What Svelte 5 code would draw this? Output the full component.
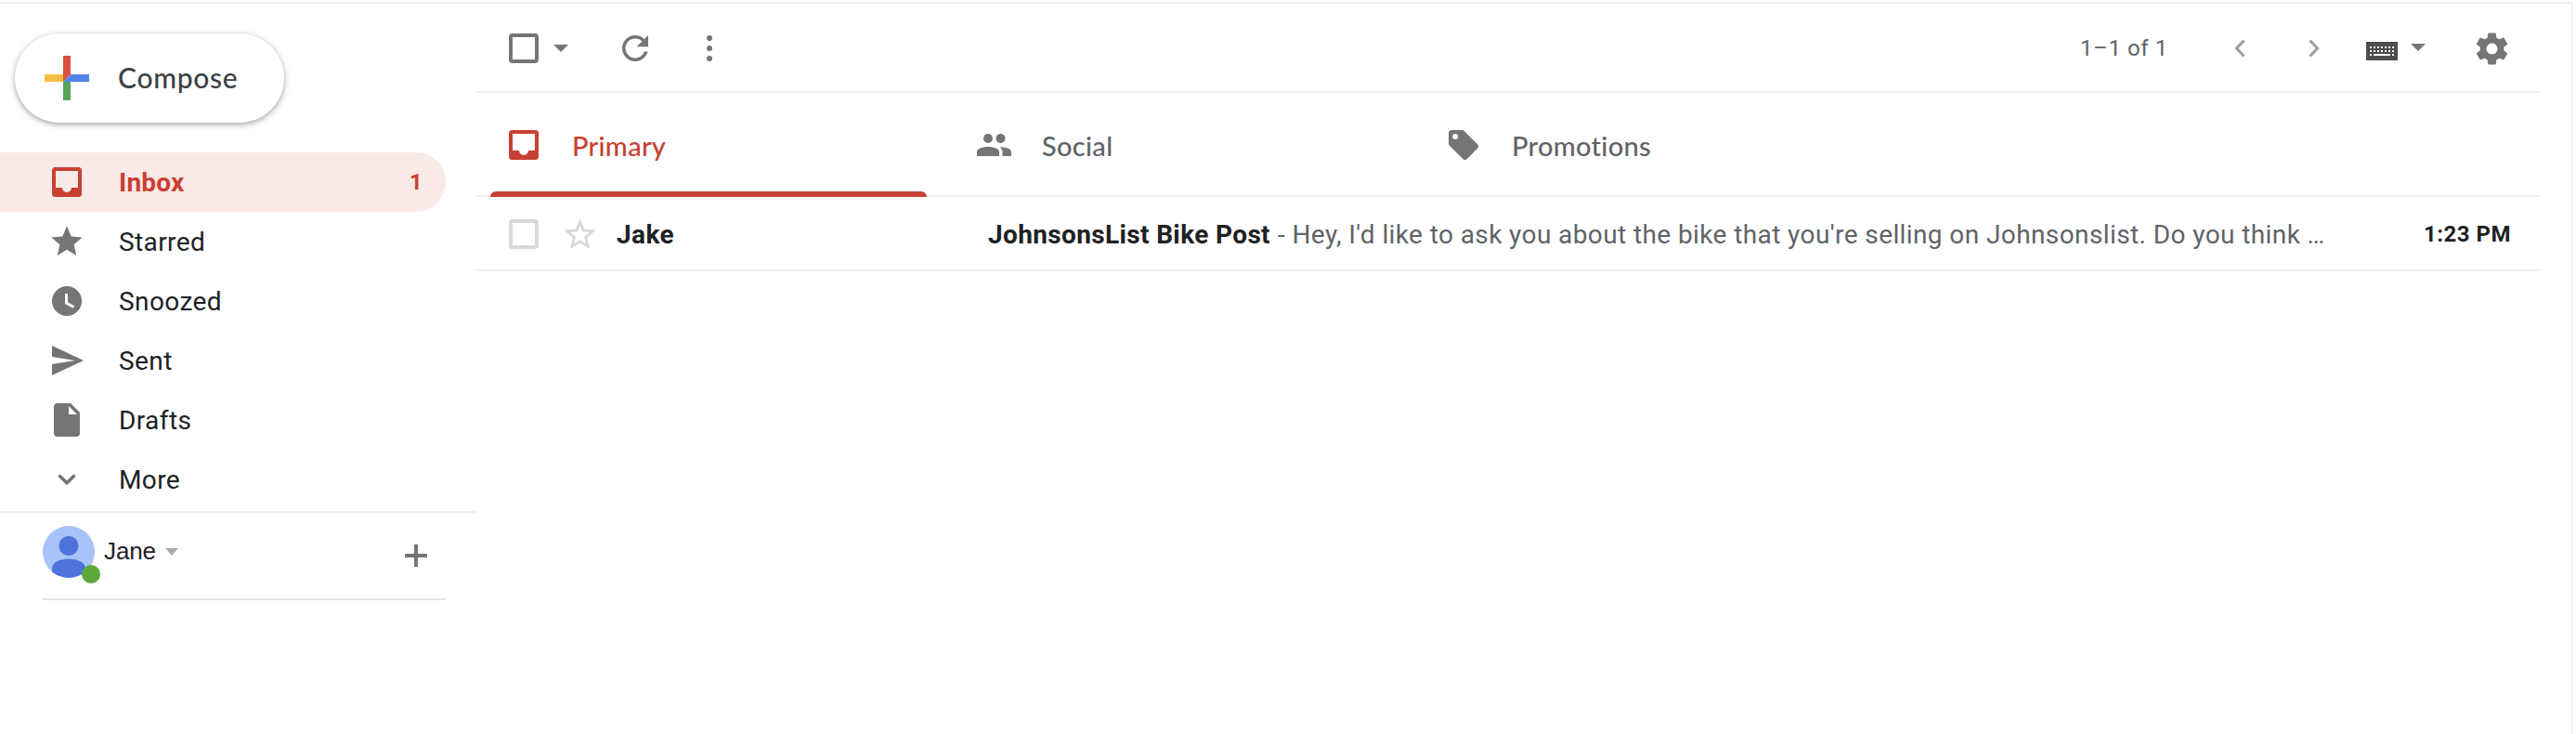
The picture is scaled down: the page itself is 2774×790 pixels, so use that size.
<script>
  const paths = {
    star: 'M12 17.27L18.18 21l-1.64-7.03L22 9.24l-7.19-.61L12 2 9.19 8.63 2 9.24l5.46 4.73L5.82 21z'
  };
  const folders = ['Starred', 'Snoozed', 'Sent', 'Drafts', 'More'];
</script>

{#snippet inboxIcon()}
  <svg class="i32" viewBox="0 0 32 32">
    <path fill-rule="evenodd" d="M3.5 0h25A3.5 3.5 0 0 1 32 3.5v25a3.5 3.5 0 0 1-3.5 3.5h-25A3.5 3.5 0 0 1 0 28.5v-25A3.5 3.5 0 0 1 3.5 0zM4 4v18h7a5 5 0 0 0 10 0h7V4z" />
  </svg>
{/snippet}

<div class="app">
  <aside>
    <button class="compose">
      <svg width="48" height="48" viewBox="0 0 48 48">
        <path fill="#f3bf42" d="M0 20h20v8H0z" />
        <path fill="#58a65c" d="M20 28h8v20h-8z" />
        <path fill="#5086ec" d="M28 20h20v8H20z" />
        <path fill="#d85140" d="M20 0h8v20l-8 8z" />
      </svg>
      <span>Compose</span>
    </button>
    <nav>
      <div class="row active">
        <span class="ic">{@render inboxIcon()}</span>
        <span class="name">Inbox</span>
        <span class="count">1</span>
      </div>
      {#each folders as f}
        <div class="row">
          <span class="ic">
            {#if f === 'Starred'}
              <svg width="40" height="40" viewBox="0 0 24 24"><path d={paths.star} /></svg>
            {:else if f === 'Snoozed'}
              <svg width="32" height="32" viewBox="0 0 32 32"><circle cx="16" cy="16" r="16" /><path d="M15.5 8v10l8 4.5" fill="none" stroke="#fff" stroke-width="3" /></svg>
            {:else if f === 'Sent'}
              <svg class="sent" width="34" height="32" viewBox="0 0 34 32"><path d="M0 0l34 16L0 32V20l25-4L0 12z" /></svg>
            {:else if f === 'Drafts'}
              <svg width="28" height="36" viewBox="0 0 28 36"><path fill-rule="evenodd" d="M4 0h14l10 10v22a4 4 0 0 1-4 4H4a4 4 0 0 1-4-4V4a4 4 0 0 1 4-4zM16 3v9h9z" /></svg>
            {:else}
              <svg width="20" height="12" viewBox="0 0 20 12"><path d="M1.5 1.500l8.500 8.200 8.500-8.200" fill="none" stroke="#757575" stroke-width="3.600" /></svg>
            {/if}
          </span>
          <span class="name">{f}</span>
        </div>
      {/each}
    </nav>
    <section class="chat">
      <span class="avatar">
        <svg width="56" height="56" viewBox="0 0 56 56">
          <clipPath id="face"><circle cx="28" cy="28" r="28" /></clipPath>
          <g clip-path="url(#face)">
            <rect width="56" height="56" fill="#a8c2fa" />
            <circle cx="28" cy="21.5" r="10.5" fill="#4c73da" />
            <path d="M10 60V46c0-7 9-10.500 18-10.500S46 39 46 46v14z" fill="#4c73da" />
          </g>
        </svg>
        <i class="online"></i>
      </span>
      <span class="user">Jane</span>
      <svg class="tri" width="14" height="8" viewBox="0 0 14 8"><path fill="#aaa" d="M0 0h14L7 8z" /></svg>
      <svg class="add" width="24" height="24" viewBox="0 0 24 24"><path d="M10 0h4v10h10v4H14v10h-4V14H0v-4h10z" /></svg>
    </section>
  </aside>

  <main>
    <header>
      <span class="box"></span>
      <svg class="drop" width="16" height="8" viewBox="0 0 16 8"><path d="M0 0h16L8 8z" /></svg>
      <svg class="refresh" width="28" height="28" viewBox="4 4 16 16"><path d="M17.65 6.35C16.2 4.9 14.21 4 12 4c-4.420 0-7.990 3.580-7.990 8s3.570 8 7.990 8c3.730 0 6.840-2.550 7.730-6h-2.080c-.82 2.330-3.040 4-5.650 4-3.310 0-6-2.690-6-6s2.690-6 6-6c1.660 0 3.140.69 4.220 1.780L13 11h7V4l-2.350 2.350z" /></svg>
      <svg class="dots" width="6" height="28" viewBox="0 0 6 28"><circle cx="3" cy="3" r="3" /><circle cx="3" cy="14" r="3" /><circle cx="3" cy="25" r="3" /></svg>
      <span class="range">1–1 of 1</span>
      <svg class="prev" width="12" height="20" viewBox="0 0 12 20"><path d="M10.500 1.500L2.500 10l8 8.500" fill="none" stroke="#a0a0a0" stroke-width="3.200" /></svg>
      <svg class="next" width="12" height="20" viewBox="0 0 12 20"><path d="M1.500 1.500L9.500 10l-8 8.500" fill="none" stroke="#a0a0a0" stroke-width="3.200" /></svg>
      <svg class="keys" width="34" height="20" viewBox="0 0 34 20">
        <path fill="#4d4d4d" d="M0 0h34v20H0z" />
        <path d="M4 6h26M4 10h26" stroke="#fff" stroke-width="2" stroke-dasharray="2 2" />
        <path d="M4 14h2M8 14h18M28 14h2" stroke="#fff" stroke-width="2" />
      </svg>
      <svg class="drop2" width="16" height="8" viewBox="0 0 16 8"><path d="M0 0h16L8 8z" /></svg>
      <svg class="gear" width="41" height="41" viewBox="0 0 24 24"><path d="M19.430 12.980c.04-.32.07-.64.07-.98s-.03-.66-.07-.98l2.110-1.650c.19-.15.24-.42.12-.64l-2-3.460c-.12-.22-.39-.3-.61-.22l-2.490 1c-.52-.4-1.080-.73-1.690-.98l-.38-2.650C14.460 2.180 14.250 2 14 2h-4c-.25 0-.46.18-.49.42l-.38 2.650c-.61.25-1.170.59-1.690.98l-2.490-1c-.23-.09-.49 0-.61.22l-2 3.460c-.13.22-.07.49.12.64l2.110 1.650c-.04.32-.07.65-.07.98s.03.66.07.98l-2.110 1.650c-.19.15-.24.42-.12.64l2 3.460c.12.22.39.3.61.22l2.490-1c.52.4 1.080.73 1.690.98l.38 2.650c.03.24.24.42.49.42h4c.25 0 .46-.18.49-.42l.38-2.650c.61-.25 1.170-.59 1.690-.98l2.490 1c.23.09.49 0 .61-.22l2-3.460c.12-.22.07-.49-.12-.64l-2.110-1.650zM12 15.500c-1.930 0-3.500-1.570-3.500-3.500s1.570-3.500 3.500-3.500 3.500 1.570 3.500 3.500-1.570 3.500-3.500 3.500z" /></svg>
    </header>

    <div class="tabs">
      <div class="tab on"><span class="tic">{@render inboxIcon()}</span><span>Primary</span></div>
      <div class="tab">
        <span class="tic"><svg width="37" height="24" viewBox="0 0 37 24"><circle cx="12" cy="5" r="5" /><circle cx="25.500" cy="5" r="5" /><path d="M0 24v-4.500C0 15.500 7 14 12 14s12 1.500 12 5.500V24zM24.500 14.200c5 0 12.500 1.300 12.500 5.300V24h-9.500v-4.500c0-2.300-1.200-4-3-5.300z" /></svg></span>
        <span>Social</span>
      </div>
      <div class="tab">
        <span class="tic"><svg width="32" height="32" viewBox="2 2 20 20"><path d="M21.410 11.580l-9-9C12.050 2.220 11.550 2 11 2H4c-1.100 0-2 .9-2 2v7c0 .55.22 1.050.59 1.420l9 9c.36.36.86.58 1.410.58.55 0 1.050-.22 1.410-.59l7-7c.37-.36.59-.86.59-1.410 0-.55-.23-1.060-.59-1.420zM6.500 8.200a1.850 1.850 0 1 1 0-3.700 1.850 1.850 0 0 1 0 3.700z" /></svg></span>
        <span>Promotions</span>
      </div>
    </div>

    <div class="mail">
      <span class="box light"></span>
      <svg class="mstar" width="41" height="41" viewBox="0 0 24 24"><path fill="#d8d8d8" d="M22 9.240l-7.190-.62L12 2 9.190 8.630 2 9.240l5.460 4.730L5.820 21 12 17.270 18.180 21l-1.630-7.030L22 9.240zM12 15.400l-3.760 2.270 1-4.280-3.320-2.880 4.380-.38L12 6.100l1.710 4.040 4.380.38-3.320 2.880 1 4.280L12 15.400z" /></svg>
      <span class="from">Jake</span>
      <span class="subject">JohnsonsList Bike Post</span>
      <span class="preview">- Hey, I'd like to ask you about the bike that you're selling on Johnsonslist. Do you think …</span>
      <span class="time">1:23 PM</span>
    </div>
  </main>
  <div class="edge"></div>
</div>

<style>
  :global(body) { margin: 0; background: #fff; }
  .app { box-sizing: border-box; width: 2774px; height: 790px; overflow: hidden; display: grid; grid-template-columns: 512px 2224px 1fr; border-top: 2px solid #fff; font-family: Roboto, sans-serif; font-size: 28px; color: #202124; white-space: nowrap; }
  .app > * { border-top: 2px solid #eee; }
  svg { fill: #757575; display: block; flex: none; }
  .i32 { width: 32px; height: 32px; fill: #c84031; }
  aside { width: 512px; }
  .compose { display: flex; align-items: center; box-sizing: border-box; margin: 32px 0 32px 16px; width: 290px; height: 96px; padding: 0 0 0 32px; border: 0; border-radius: 48px; background: #fff; box-shadow: 0 2px 4px rgba(60, 64, 67, .3), 0 2px 6px 2px rgba(60, 64, 67, .15); gap: 31px; color: #3c4043; font: 500 30px Lato, sans-serif; letter-spacing: .7px; }
  .compose span { padding-bottom: 2px; }
  .row { display: flex; align-items: center; height: 64px; width: 480px; box-sizing: border-box; padding: 0 25px 0 44px; letter-spacing: .4px; }
  .active { background: #f9e9e7; border-radius: 0 32px 32px 0; color: #c84031; font-weight: 700; letter-spacing: .2px; }
  .ic { width: 56px; display: flex; justify-content: center; margin-right: 28px; }
  .sent { margin-left: 2px; }
  .count { margin-left: auto; font-size: 24px; }
  .chat { position: relative; display: flex; box-sizing: border-box; height: 98px; margin-top: 2px; border-top: 2px solid #eee; padding: 14px 0 0 46px; }
  .chat::after { content: ''; position: absolute; left: 46px; right: 32px; bottom: 2px; height: 2px; background: #e4e4e4; }
  .avatar { position: relative; width: 56px; height: 56px; }
  .online { position: absolute; left: 42px; top: 42px; width: 20px; height: 20px; border-radius: 50%; background: #5da83a; }
  .user { margin-left: 10px; line-height: 54px; font-family: "Liberation Sans", Arial, sans-serif; font-size: 26px; letter-spacing: -.1px; width: 56px; }
  .tri { margin: 24px 0 0 10px; }
  .add { margin: 20px 52px 0 auto; }
  main { width: 2224px; }
  header { display: flex; align-items: center; box-sizing: border-box; height: 96px; padding: 2px 0 0 36px; border-bottom: 2px solid #eee; }
  .box { box-sizing: border-box; width: 32px; height: 32px; border: 4px solid #757575; border-radius: 4px; flex: none; }
  .light { border-color: #d8d8d8; }
  .drop { margin-left: 16px; }
  .refresh { margin-left: 58px; }
  .dots { margin-left: 63px; }
  .range { margin-left: 1473px; width: 94px; font-size: 24px; color: #5f6368; letter-spacing: .6px; }
  .prev { margin-left: 72px; }
  .next { margin-left: 68px; }
  .keys { margin: 6px 0 0 50px; }
  .drop2 { margin: -2px 0 0 14px; }
  .gear { margin-left: 51px; }
  .tabs { display: flex; box-sizing: border-box; height: 112px; padding-left: 16px; border-bottom: 2px solid #eee; color: #5f6368; font-family: Lato, sans-serif; font-size: 29px; font-weight: 500; letter-spacing: .3px; }
  .tab { position: relative; display: flex; align-items: center; width: 506px; height: 112px; box-sizing: border-box; padding-left: 16px; }
  .on { width: 470px; margin-right: 36px; color: #c84031; }
  .on::after { content: ''; position: absolute; inset: auto 0 0; height: 6px; background: #c84031; border-radius: 6px 6px 0 0; }
  .tic { width: 40px; display: flex; justify-content: center; margin-right: 32px; }
  .mail { display: flex; align-items: center; box-sizing: border-box; height: 80px; padding: 2px 0 0 36px; border-bottom: 2px solid #eee; }
  .mstar { margin-left: 24px; }
  .from { margin-left: 19px; width: 400px; font-weight: 700; letter-spacing: .4px; }
  .subject { font-weight: 700; letter-spacing: .36px; }
  .preview { margin-left: 8px; color: #5f6368; letter-spacing: .4px; }
  .time { margin-left: auto; margin-right: 32px; font-size: 24px; font-weight: 700; letter-spacing: .5px; }
  .edge { width: 33px; border-right: 2px solid #f1f1f1; }
</style>
